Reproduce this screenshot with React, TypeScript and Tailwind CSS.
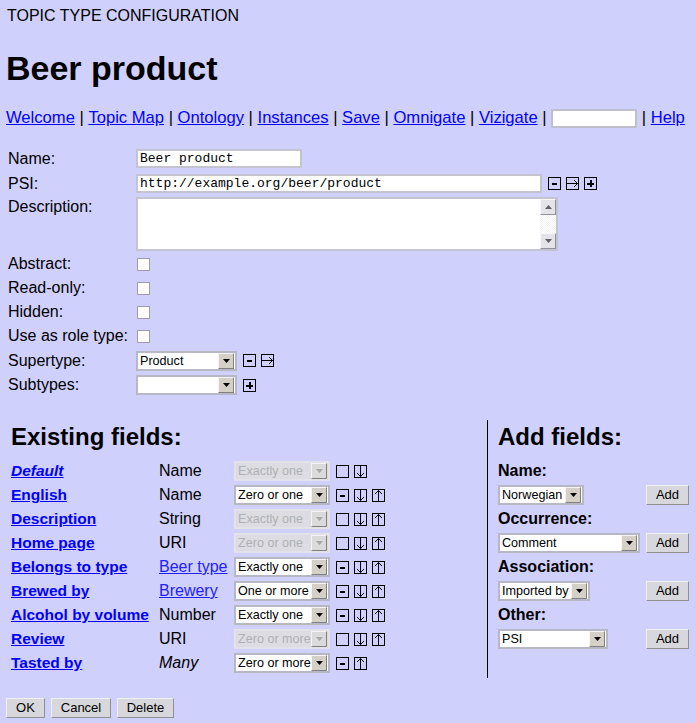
import React from "react";

type IconType = "minus" | "plus" | "right" | "down" | "up" | "empty";

const Icon = ({ type }: { type: IconType }) => (
  <svg width="13" height="13" viewBox="0 0 13 13" className="block shrink-0" shapeRendering="crispEdges">
    <rect x="0.5" y="0.5" width="12" height="12" fill="none" stroke="#000" />
    {type === "minus" && <rect x="4" y="6" width="5" height="2" fill="#000" />}
    {type === "plus" && (
      <g fill="#000">
        <rect x="3" y="6" width="7" height="2" />
        <rect x="5.5" y="3" width="2" height="7" />
      </g>
    )}
    {type === "right" && (
      <g fill="none" stroke="#000" shapeRendering="auto">
        <line x1="1" y1="6.5" x2="12" y2="6.5" />
        <polyline points="8,3 11.5,6.5 8,10" />
      </g>
    )}
    {type === "down" && (
      <g fill="none" stroke="#000" shapeRendering="auto">
        <line x1="6.5" y1="1" x2="6.5" y2="11.5" />
        <polyline points="3,8 6.5,11.5 10,8" />
      </g>
    )}
    {type === "up" && (
      <g fill="none" stroke="#000" shapeRendering="auto">
        <line x1="6.5" y1="1.5" x2="6.5" y2="12" />
        <polyline points="3,5 6.5,1.5 10,5" />
      </g>
    )}
  </svg>
);

const DropButton = ({ disabled }: { disabled?: boolean }) => (
  <div
    className={`w-[16px] h-[16px] shrink-0 flex items-center justify-center border border-t-[#f4f4f4] border-l-[#f4f4f4] border-r-[#808080] border-b-[#808080] ${
      disabled ? "bg-[#dadada]" : "bg-[#d4d0c8]"
    }`}
  >
    <svg width="7" height="4" viewBox="0 0 7 4">
      <polygon points="0,0 7,0 3.5,4" fill={disabled ? "#a8a8a8" : "#000"} />
    </svg>
  </div>
);

const Select = ({
  value,
  width,
  disabled,
}: {
  value: string;
  width: number;
  disabled?: boolean;
}) => (
  <div
    className={`h-[20px] flex items-center border-2 pl-[2px] pr-px shrink-0 ${
      disabled ? "bg-[#dcdce2] border-[#e2e2e8] text-[#b0b0b4]" : "bg-white border-[#b8b8c4] text-black"
    }`}
    style={{ width }}
  >
    <span className="flex-1 text-[12.6px] leading-[16px] whitespace-nowrap overflow-hidden">{value}</span>
    <DropButton disabled={disabled} />
  </div>
);

const Checkbox = () => <div className="w-[13px] h-[13px] bg-white border border-[#9c9cac]" />;

const Button = ({ label, w }: { label: string; w: string }) => (
  <button
    className={`${w} h-[20px] bg-[#d8d8dc] text-[13px] leading-[16px] text-black border border-t-[#f0f0f0] border-l-[#f0f0f0] border-r-[#909090] border-b-[#909090] flex items-center justify-center`}
  >
    {label}
  </button>
);

const Link = ({ children }: { children: React.ReactNode }) => (
  <a className="text-[#0000ff] underline cursor-pointer">{children}</a>
);

type Field = {
  name: string;
  italic?: boolean;
  type: string;
  typeKind?: "link" | "italic";
  card: string;
  disabled?: boolean;
  icons: IconType[];
};

const fields: Field[] = [
  { name: "Default", italic: true, type: "Name", card: "Exactly one", disabled: true, icons: ["empty", "down"] },
  { name: "English", type: "Name", card: "Zero or one", icons: ["minus", "down", "up"] },
  { name: "Description", type: "String", card: "Exactly one", disabled: true, icons: ["empty", "down", "up"] },
  { name: "Home page", type: "URI", card: "Zero or one", disabled: true, icons: ["empty", "down", "up"] },
  { name: "Belongs to type", type: "Beer type", typeKind: "link", card: "Exactly one", icons: ["minus", "down", "up"] },
  { name: "Brewed by", type: "Brewery", typeKind: "link", card: "One or more", icons: ["minus", "down", "up"] },
  { name: "Alcohol by volume", type: "Number", card: "Exactly one", icons: ["minus", "down", "up"] },
  { name: "Review", type: "URI", card: "Zero or more", disabled: true, icons: ["empty", "down", "up"] },
  { name: "Tasted by", type: "Many", typeKind: "italic", card: "Zero or more", icons: ["minus", "up"] },
];

const Label = ({ children }: { children: React.ReactNode }) => (
  <div className="text-[16px] leading-[18px]">{children}</div>
);

export default function App() {
  return (
    <div className="min-h-screen w-[695px] bg-[#d0d0fc] text-black font-['Liberation_Sans',Arial,sans-serif]">
      <div className="pl-[7px] pt-[7px] text-[16px] leading-[18px]">TOPIC TYPE CONFIGURATION</div>
      <h1 className="pl-[6px] mt-[23px] text-[34px] font-bold leading-[40px]">Beer product</h1>

      <div className="pl-[6px] mt-[20px] h-[20px] flex items-center text-[16.6px] leading-[18px] whitespace-pre">
        <Link>Welcome</Link>
        <span> | </span>
        <Link>Topic Map</Link>
        <span> | </span>
        <Link>Ontology</Link>
        <span> | </span>
        <Link>Instances</Link>
        <span> | </span>
        <Link>Save</Link>
        <span> | </span>
        <Link>Omnigate</Link>
        <span> | </span>
        <Link>Vizigate</Link>
        <span> | </span>
        <div className="w-[86px] h-[19px] bg-white border-2 border-[#c0c0cc]" />
        <span> | </span>
        <Link>Help</Link>
      </div>

      {/* Form */}
      <div className="mt-[18px] pl-[8px] grid grid-cols-[128px_1fr]">
        <div className="h-[25px] flex items-center"><Label>Name:</Label></div>
        <div className="h-[25px] flex items-center">
          <div className="w-[166px] h-[19px] bg-white border-2 border-[#c4c4d0] pl-[2px] font-['Liberation_Mono',monospace] text-[13px] leading-[15px]">
            Beer product
          </div>
        </div>

        <div className="h-[25px] flex items-center"><Label>PSI:</Label></div>
        <div className="h-[25px] flex items-center gap-[5px]">
          <div className="w-[406px] h-[19px] bg-white border-2 border-[#c4c4d0] pl-[2px] font-['Liberation_Mono',monospace] text-[13px] leading-[15px] mr-[1px]">
            http://example.org/beer/product
          </div>
          <Icon type="minus" />
          <Icon type="right" />
          <Icon type="plus" />
        </div>

        <div className="h-[56px] pt-[2px]"><Label>Description:</Label></div>
        <div className="h-[56px] pt-[1px]">
          <div className="w-[422px] h-[54px] bg-white border-2 border-[#c4c4d0] flex justify-end">
            <div className="w-[16px] h-full flex flex-col bg-[repeating-conic-gradient(#f2f2f2_0%_25%,#ffffff_0%_50%)] bg-[length:2px_2px]">
              <div className="h-[16px] bg-[#e4e4e8] border border-t-[#f8f8f8] border-l-[#f8f8f8] border-r-[#9090a0] border-b-[#9090a0] flex items-center justify-center">
                <svg width="7" height="4" viewBox="0 0 7 4"><polygon points="0,4 7,4 3.5,0" fill="#606060" /></svg>
              </div>
              <div className="flex-1" />
              <div className="h-[16px] bg-[#e4e4e8] border border-t-[#f8f8f8] border-l-[#f8f8f8] border-r-[#9090a0] border-b-[#9090a0] flex items-center justify-center">
                <svg width="7" height="4" viewBox="0 0 7 4"><polygon points="0,0 7,0 3.5,4" fill="#606060" /></svg>
              </div>
            </div>
          </div>
        </div>

        {["Abstract:", "Read-only:", "Hidden:", "Use as role type:"].map((l) => (
          <React.Fragment key={l}>
            <div className="h-[24px] flex items-center"><Label>{l}</Label></div>
            <div className="h-[24px] flex items-center pl-px"><Checkbox /></div>
          </React.Fragment>
        ))}

        <div className="h-[25px] flex items-center"><Label>Supertype:</Label></div>
        <div className="h-[25px] flex items-center gap-[5px]">
          <div className="mr-px"><Select value="Product" width={101} /></div>
          <Icon type="minus" />
          <Icon type="right" />
        </div>

        <div className="h-[24px] flex items-center"><Label>Subtypes:</Label></div>
        <div className="h-[24px] flex items-center gap-[5px]">
          <div className="mr-px"><Select value="" width={101} /></div>
          <Icon type="plus" />
        </div>
      </div>

      {/* Fields section */}
      <div className="mt-[23px] flex">
        <div className="w-[488px] border-r border-black pb-[3px] pl-[11px]">
          <div className="h-[39px] pt-[3px] text-[24px] font-bold leading-[28px]">Existing fields:</div>
          {fields.map((f) => (
            <div key={f.name} className="h-[24px] grid grid-cols-[148px_75px_102px_auto] items-center">
              <div className="text-[15.5px] font-bold leading-[18px] whitespace-nowrap">
                <a className={`text-[#0000ff] underline ${f.italic ? "italic" : ""}`}>{f.name}</a>
              </div>
              <div className="text-[16px] leading-[18px] whitespace-nowrap">
                {f.typeKind === "link" ? (
                  <a className="text-[#2020ff] underline">{f.type}</a>
                ) : f.typeKind === "italic" ? (
                  <span className="italic">{f.type}</span>
                ) : (
                  f.type
                )}
              </div>
              <div>
                <Select value={f.card} width={96} disabled={f.disabled} />
              </div>
              <div className="flex gap-[5px]">
                {f.icons.map((ic, i) => (
                  <Icon key={i} type={ic} />
                ))}
              </div>
            </div>
          ))}
        </div>

        <div className="w-[207px] pl-[10px] pr-[6px]">
          <div className="h-[39px] pt-[3px] text-[24px] font-bold leading-[28px]">Add fields:</div>
          <div className="h-[24px] flex items-center text-[16px] font-bold leading-[18px]">Name:</div>
          <div className="h-[24px] flex items-center justify-between">
            <Select value="Norwegian" width={86} />
            <Button label="Add" w="w-[43px]" />
          </div>
          <div className="h-[24px] flex items-center text-[16px] font-bold leading-[18px]">Occurrence:</div>
          <div className="h-[24px] flex items-center justify-between">
            <Select value="Comment" width={142} />
            <Button label="Add" w="w-[43px]" />
          </div>
          <div className="h-[24px] flex items-center text-[16px] font-bold leading-[18px]">Association:</div>
          <div className="h-[24px] flex items-center justify-between">
            <Select value="Imported by" width={92} />
            <Button label="Add" w="w-[43px]" />
          </div>
          <div className="h-[24px] flex items-center text-[16px] font-bold leading-[18px]">Other:</div>
          <div className="h-[24px] flex items-center justify-between">
            <Select value="PSI" width={110} />
            <Button label="Add" w="w-[43px]" />
          </div>
        </div>
      </div>

      <div className="mt-[20px] pl-[6px] flex gap-[6px] pb-[5px]">
        <Button label="OK" w="w-[39px]" />
        <Button label="Cancel" w="w-[60px]" />
        <Button label="Delete" w="w-[57px]" />
      </div>
    </div>
  );
}
